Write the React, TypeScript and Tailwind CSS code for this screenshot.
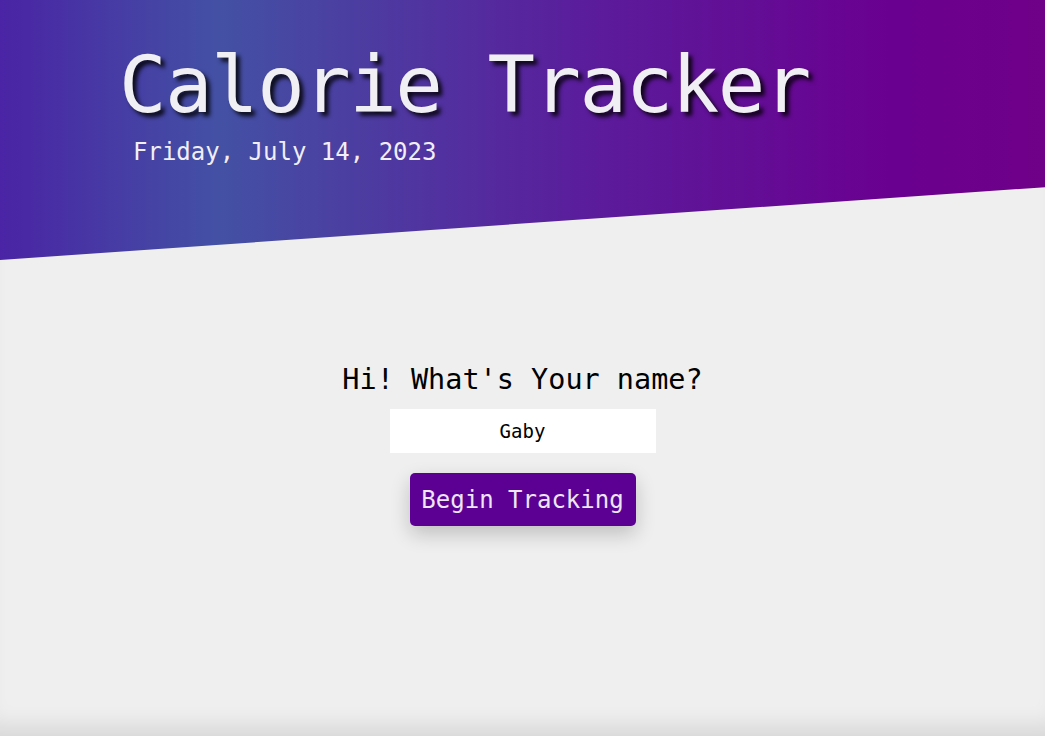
import { useState } from "react";

const MONO = "font-['DejaVu_Sans_Mono','Liberation_Mono',monospace]";

export default function App() {
  const [name, setName] = useState("Gaby");

  return (
    <div className={`min-h-[736px] bg-[#efefef] ${MONO} shadow-[inset_0_-24px_22px_-14px_rgba(0,0,0,0.1)]`}>
      {/* Header */}
      <header className="h-[260px] bg-[linear-gradient(90deg,#4a24a4_0%,#4351a4_21%,#5a1e9c_55%,#6a0090_85%,#6f0088_100%)] [clip-path:polygon(0_0,100%_0,100%_72%,0_100%)]">
        <div className="pl-[119px] pt-[46px]">
          <h1 className="text-[79px] leading-none tracking-[-1.5px] text-[#f0eff3] [text-shadow:4px_4px_4px_rgba(0,0,0,0.85)]">
            Calorie Tracker
          </h1>
          <p className="mt-[15px] ml-[14px] text-[24px] leading-none text-[#f1eef6]">
            Friday, July 14, 2023
          </p>
        </div>
      </header>

      {/* Name form */}
      <main className="flex flex-col items-center pt-[103px]">
        <h2 className="text-[28.5px] leading-[34px] text-black">Hi! What's Your name?</h2>
        <input
          value={name}
          onChange={(e) => setName(e.target.value)}
          className="mt-[12px] w-[266px] h-[44px] bg-white text-center text-[19px] text-black outline-none"
        />
        <button className="mt-[20px] w-[226px] h-[53px] rounded-[5px] bg-[#5c0094] text-[24px] text-[#ece6f6] shadow-[0_8px_20px_rgba(0,0,0,0.2)]">
          Begin Tracking
        </button>
      </main>
    </div>
  );
}
